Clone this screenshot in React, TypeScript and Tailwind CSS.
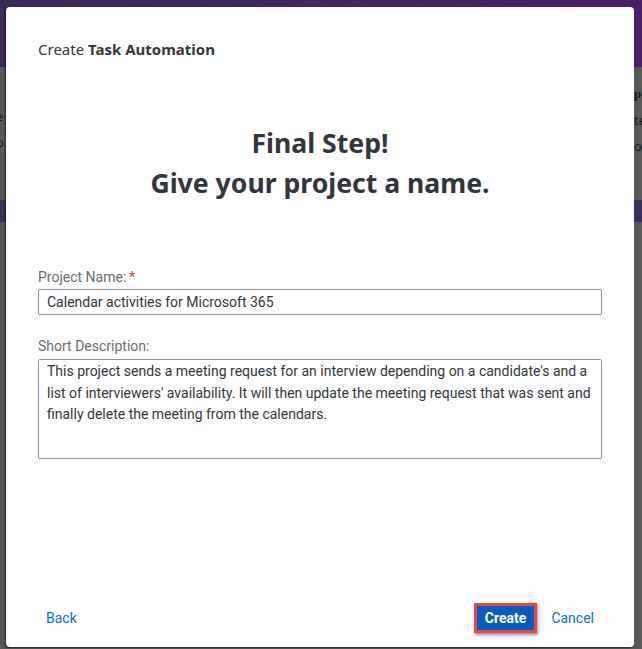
export default function App() {
  return (
    <div className="relative w-[642px] h-[649px] overflow-hidden bg-[#595959] font-['Noto_Sans',sans-serif]">
      {/* dimmed page behind the dialog */}
      <div className="h-[67px] bg-gradient-to-r from-[#3a2a5a] to-[#4b1d68]" />
      <div className="flex justify-between h-[133px] text-[13px] text-[#1b1b1b]">
        <div className="pt-[36px] leading-[26px] -ml-[4px]">
          <div>e</div>
          <div>o</div>
        </div>
        <div className="pt-[14px] leading-[26px] -mr-[6px] w-[14px]">
          <div className="font-bold font-['Liberation_Serif',serif]">p</div>
          <div>te</div>
          <div>o</div>
        </div>
      </div>
      <div className="h-[22px] bg-[#3b2f5c]" />

      {/* dialog */}
      <div className="absolute left-[6px] top-[7px] w-[628px] h-[640px] bg-white rounded-[4px] shadow-[-1px_1px_2px_rgba(0,0,0,0.6)] flex flex-col">
        <div className="px-[32px] pt-[32px] text-[15px] text-[#32363a] leading-[20px]">
          Create <span className="font-bold">Task Automation</span>
        </div>

        <div className="mt-[64px] text-center text-[26.6px] font-bold text-[#32363a] leading-[40px]">
          <div>Final Step!</div>
          <div>Give your project a name.</div>
        </div>

        <div className="px-[32px] mt-[65px] flex flex-col font-['Roboto',sans-serif] text-[14px]">
          <label className="text-[#6a6d70] leading-[18px]">
            Project Name:<span className="text-[#d04343] ml-[3px]">*</span>
          </label>
          <div className="mt-[3px] h-[26px] border border-[#89919a] rounded-[2px] px-[8px] text-[#32363a] leading-[24px]">
            Calendar activities for Microsoft 365
          </div>

          <label className="mt-[22px] text-[#6a6d70] leading-[18px]">
            Short Description:
          </label>
          <div className="mt-[4px] h-[100px] border border-[#89919a] rounded-[2px] px-[8px] py-[1px] text-[#32363a] leading-[21.5px]">
            This project sends a meeting request for an interview depending on a candidate's and a list of interviewers' availability. It will then update the meeting request that was sent and finally delete the meeting from the calendars.
          </div>
        </div>

        <div className="mt-auto flex items-center pl-[40px] pr-[40px] pb-[14px] text-[14px] font-['Roboto',sans-serif]">
          <span className="text-[#0a6ed1]">Back</span>
          <div className="ml-auto flex items-center">
            <div className="border-[3px] border-[#e8474b] shadow-[1px_2px_3px_rgba(0,0,0,0.45)]">
              <div className="bg-[#0a5cbc] text-white font-bold px-[8px] leading-[24px]">Create</div>
            </div>
            <span className="ml-[14px] text-[#0a6ed1]">Cancel</span>
          </div>
        </div>
      </div>
    </div>
  );
}
